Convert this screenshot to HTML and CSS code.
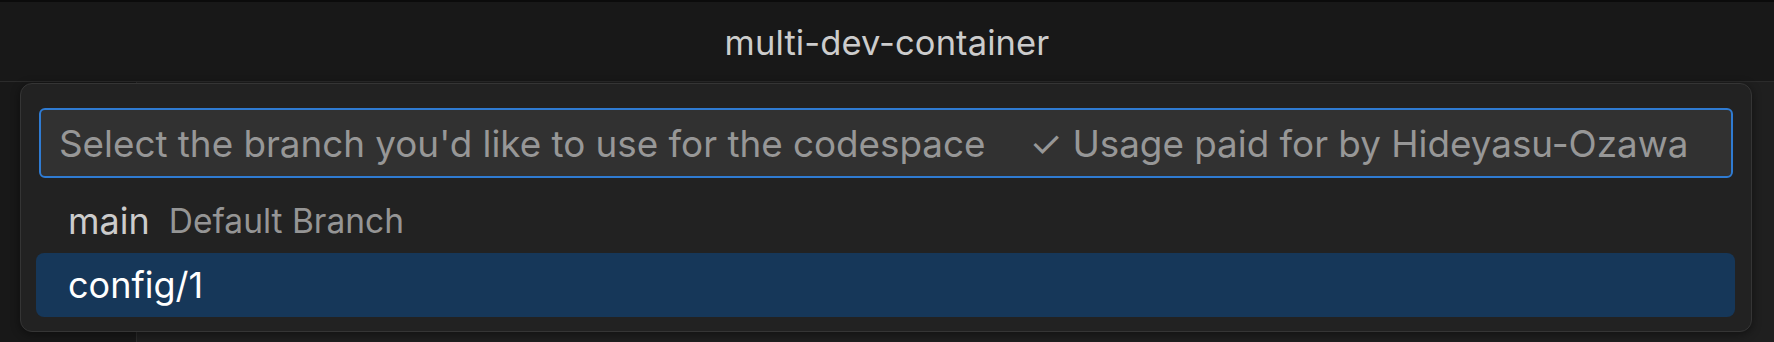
FILE: index.html
```html
<!DOCTYPE html>
<html lang="en">
<head>
<meta charset="utf-8">
<title>multi-dev-container</title>
<link rel="stylesheet" href="styles.css">
</head>
<body>
<div class="window">
  <header class="titlebar"><span class="title">multi-dev-container</span></header>
  <div class="workbench">
    <aside class="sidebar"></aside>
    <main class="editor"></main>
  </div>
  <div class="quick-pick">
    <div class="qp-input">
      <span class="qp-placeholder">Select the branch you'd like to use for the codespace</span>
      <span class="qp-placeholder">✓ Usage paid for by Hideyasu-Ozawa</span>
    </div>
    <ul class="qp-list">
      <li class="qp-row"><span class="qp-label">main</span><span class="qp-desc">Default Branch</span></li>
      <li class="qp-row is-focused"><span class="qp-label">config/1</span></li>
    </ul>
  </div>
</div>
</body>
</html>
```
FILE: styles.css
```css
html, body {
  margin: 0;
  padding: 0;
  height: 100%;
  background: #181818;
  overflow: hidden;
}
body {
  font-family: Inter, "Noto Sans", sans-serif;
}
.window {
  position: relative;
  height: 342px;
  display: flex;
  flex-direction: column;
}
.titlebar {
  height: 79px;
  border-top: 2px solid #0b0b0b;
  border-bottom: 1px solid #2b2b2b;
  background: #181818;
  display: flex;
  align-items: center;
  justify-content: center;
  flex: none;
}
.title {
  color: #cccccc;
  font-size: 34.5px;
  letter-spacing: 0.1px;
  margin-top: 2px;
}
.workbench {
  flex: 1;
  display: flex;
}
.sidebar {
  width: 136px;
  background: #181818;
  border-right: 1px solid #2b2b2b;
}
.editor {
  flex: 1;
  background: #1f1f1f;
}
.quick-pick {
  position: absolute;
  left: 20px;
  top: 83px;
  width: 1730px;
  height: 247px;
  box-sizing: content-box;
  border: 1px solid #353535;
  border-radius: 12px;
  background: #222222;
  box-shadow: 0 2px 10px rgba(0, 0, 0, 0.45);
  padding: 0;
  display: flex;
  flex-direction: column;
}
.qp-input {
  margin: 24px 18px 0 18px;
  height: 66px;
  border: 2px solid #2f7bd2;
  border-radius: 6px;
  background: #313131;
  display: flex;
  align-items: center;
  gap: 44px;
  padding-left: 18px;
}
.qp-placeholder {
  color: #979797;
  font-size: 36.8px;
  white-space: nowrap;
}
.qp-list {
  list-style: none;
  margin: 11px 16px 0 15px;
  padding: 0;
}
.qp-row {
  height: 64px;
  border-radius: 8px;
  display: flex;
  align-items: center;
  padding-left: 32px;
  gap: 19px;
}
.qp-row.is-focused {
  background: #163759;
}
.qp-label {
  color: #cccccc;
  font-size: 36px;
}
.is-focused .qp-label {
  color: #ffffff;
}
.qp-desc {
  color: #959595;
  font-size: 33.5px;
}
```
